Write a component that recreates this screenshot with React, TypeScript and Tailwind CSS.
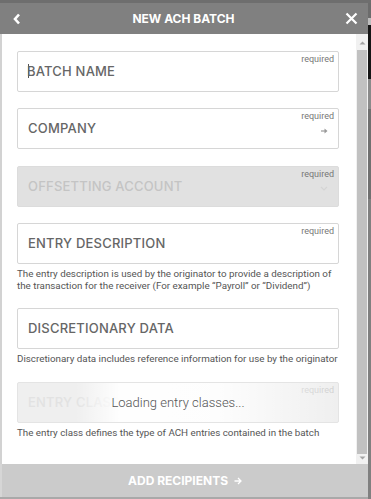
import React from "react";

const LABEL_FONT = { fontFamily: "Inter, 'Open Sans', sans-serif" };
const HELP_FONT = { fontFamily: "Roboto, 'Liberation Sans', sans-serif" };

type FieldProps = {
  label: string;
  required?: boolean;
  help?: React.ReactNode;
  variant?: "normal" | "disabled" | "loading";
  arrow?: boolean;
  chevron?: boolean;
  caret?: boolean;
  className?: string;
};

function Field({ label, required, help, variant = "normal", arrow, chevron, caret, className = "" }: FieldProps) {
  const box =
    variant === "disabled"
      ? "bg-[#e1e1e1] border-[#dcdcdc]"
      : variant === "loading"
      ? "bg-[#efefef] border-[#e4e4e4]"
      : "bg-white border-[#d6d6d6]";
  const labelColor =
    variant === "disabled" ? "text-[#c4c4c4]" : variant === "loading" ? "text-[#e2e2e2]" : "text-[#666666]";
  return (
    <div className={className}>
      <div className={`relative h-[41px] border rounded-[2px] flex items-center pl-[10px] ${box}`}>
        <span className={`text-[13px] font-medium tracking-[0.2px] ${labelColor}`} style={LABEL_FONT}>
          {caret && <span className="inline-block w-px h-[14px] bg-[#555] align-middle -mr-[2px] mb-[2px]" />}
          {label}
        </span>
        {required && (
          <span
            className={`absolute right-[4px] top-[1px] text-[9px] ${variant === "loading" ? "text-[#cfcfcf]" : "text-[#777]"}`}
            style={HELP_FONT}
          >
            required
          </span>
        )}
        {arrow && (
          <svg className="absolute right-[10px] top-[19px]" width="7" height="6" viewBox="0 0 7 6">
            <path d="M0 3h5" stroke="#999" strokeWidth="1.2" />
            <path d="M3.5 0.5L6.5 3L3.5 5.5Z" fill="#999" />
          </svg>
        )}
        {chevron && (
          <svg className="absolute right-[10px] top-[19px]" width="8" height="5" viewBox="0 0 8 5">
            <path d="M1 1l3 3 3-3" stroke="#d4d4d4" strokeWidth="1.2" fill="none" />
          </svg>
        )}
        {variant === "loading" && (
          <div className="absolute inset-0 flex items-center justify-center bg-[linear-gradient(90deg,rgba(255,255,255,0)_18%,rgba(255,255,255,0.97)_32%,rgba(255,255,255,0.9)_62%,rgba(255,255,255,0)_100%)]">
            <span className="text-[13px] font-light text-[#555]" style={HELP_FONT}>
              Loading entry classes...
            </span>
          </div>
        )}
      </div>
      {help && (
        <p className="mt-[4px] text-[9.8px] leading-[12px] text-[#555]" style={HELP_FONT}>
          {help}
        </p>
      )}
    </div>
  );
}

export default function App() {
  return (
    <div className="w-[371px] h-[499px] flex flex-col bg-[#6f6f6f] overflow-hidden">
      <div className="h-[3px] bg-[#6e6e6e]" />
      <div className="flex flex-1 min-h-0">
        <div className="w-[368px] flex flex-col">
          {/* Header */}
          <div className="h-[31px] bg-[#808080] flex items-center justify-between px-[12px] shrink-0">
            <svg width="10" height="12" viewBox="0 0 10 12">
              <path d="M7 1.5L3 6l4 4.5" stroke="#fff" strokeWidth="2.6" fill="none" />
            </svg>
            <span className="text-white font-bold text-[12px]" style={LABEL_FONT}>
              NEW ACH BATCH
            </span>
            <svg width="13" height="13" viewBox="0 0 13 13" className="mr-[-2px]">
              <path d="M1.5 1.5l10 10M11.5 1.5l-10 10" stroke="#fff" strokeWidth="2.2" />
            </svg>
          </div>

          {/* Body */}
          <div className="flex flex-1 min-h-0 border-l-2 border-[#d2d2d2] bg-white">
            <div className="flex-1 flex flex-col pt-[17px] pl-[15px] pr-[17px]">
              <Field label="BATCH NAME" required caret />
              <Field label="COMPANY" required arrow className="mt-[16px]" />
              <Field label="OFFSETTING ACCOUNT" required variant="disabled" chevron className="mt-[17px]" />
              <Field
                label="ENTRY DESCRIPTION"
                required
                className="mt-[16px]"
                help={<>The entry description is used by the originator to provide a description of the transaction for the receiver (For example “Payroll” or “Dividend”)</>}
              />
              <Field
                label="DISCRETIONARY DATA"
                className="mt-[16px]"
                help="Discretionary data includes reference information for use by the originator"
              />
              <Field
                label="ENTRY CLASS"
                required
                variant="loading"
                className="mt-[17px]"
                help="The entry class defines the type of ACH entries contained in the batch"
              />
            </div>
            {/* Scrollbar */}
            <div className="w-[12px] bg-[#f1f1f1] flex flex-col items-center">
              <svg width="7" height="6" viewBox="0 0 7 6" className="mt-[6px]">
                <path d="M0.5 4.5L3.5 1.5L6.5 4.5Z" fill="#a3a3a3" />
              </svg>
              <div className="mt-[4px] w-[10px] h-[404px] bg-[#c1c1c1]" />
              <svg width="7" height="6" viewBox="0 0 7 6" className="mt-[1px]">
                <path d="M0.5 1.5L3.5 4.5L6.5 1.5Z" fill="#a3a3a3" />
              </svg>
            </div>
          </div>

          {/* Footer */}
          <div className="h-[33px] bg-[#cbcbcb] border-l-2 border-[#d6d6d6] flex items-center justify-center shrink-0">
            <span className="text-white font-bold text-[12px] flex items-center gap-[6px]" style={LABEL_FONT}>
              ADD RECIPIENTS
              <svg width="8" height="8" viewBox="0 0 8 8">
                <path d="M0.5 4h6.5M4 1l3 3-3 3" stroke="#fff" strokeWidth="1.3" fill="none" />
              </svg>
            </span>
          </div>
          <div className="h-[2px] bg-[#a9a9a9]" />
        </div>

        {/* Page behind the modal */}
        <div className="w-[3px] flex flex-col">
          <div className="h-[15px] bg-[#6c6c6c]" />
          <div className="h-[7px] bg-[#bdbdbd]" />
          <div className="h-[54px] bg-[#151515]" />
          <div className="h-[30px] bg-[#8a8a8a]" />
          <div className="h-[90px] bg-[#707070]" />
          <div className="flex-1 bg-[#808080]" />
        </div>
      </div>
    </div>
  );
}
